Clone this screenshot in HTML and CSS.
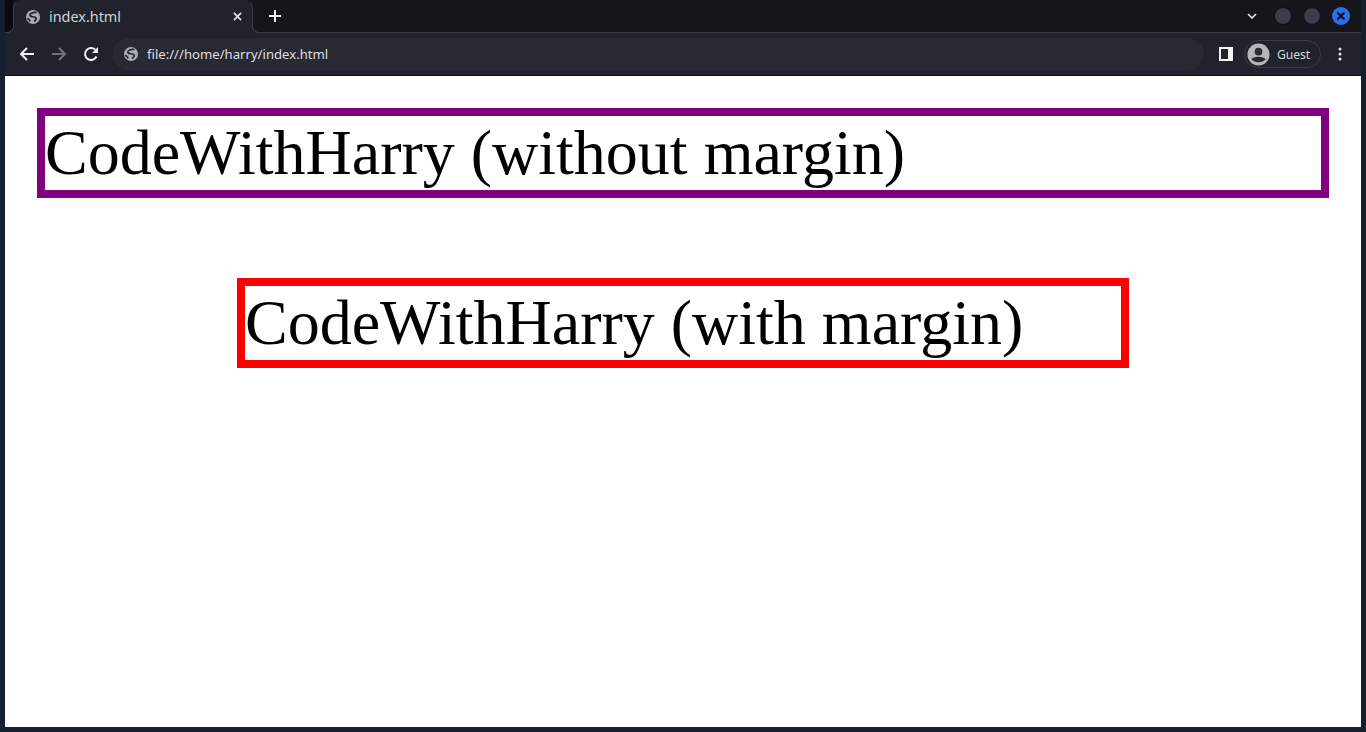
FILE: index.html
```html
<!DOCTYPE html>
<html lang="en">
<head>
    <meta charset="UTF-8">
    <title>index.html</title>
    <link rel="stylesheet" href="styles.css">
</head>
<body>
    <div class="window">
        <div class="tabstrip">
            <div class="tab">
                <svg class="globe" viewBox="0 0 14 14"><circle cx="7" cy="7" r="7" fill="#a9adb5"/><path d="M10.500 2.600C7.500 1.600 3 3.500 4 5.500 5 7.500 9 6 10 8c.6 1.200-.5 2.500-2 3.500M1 8.500c1.500 0 2.500 1 3 3" fill="none" stroke="#20232b" stroke-width="1.700"/></svg>
                <span class="tab-title">index.html</span>
                <svg class="tab-close" viewBox="0 0 10 10"><path d="M1 1l8 8M9 1l-8 8" stroke="#e4e5e8" stroke-width="1.800"/></svg>
            </div>
            <svg class="new-tab" viewBox="0 0 12 12"><path d="M6 0v12M0 6h12" stroke="#f1f2f4" stroke-width="2"/></svg>
            <div class="strip-right">
                <svg class="chevron" viewBox="0 0 10 6"><path d="M1 1l4 4 4-4" fill="none" stroke="#e4e5e8" stroke-width="1.600"/></svg>
                <span class="dot"></span>
                <span class="dot"></span>
                <span class="dot dot-close"><svg viewBox="0 0 10 10"><path d="M1.500 1.500l7 7M8.500 1.500l-7 7" stroke="#10131a" stroke-width="2.200"/></svg></span>
            </div>
        </div>
        <div class="toolbar">
            <svg class="nav-icon" viewBox="0 0 16 16"><path d="M15 8H2M8 2L2 8l6 6" fill="none" stroke="#f1f2f4" stroke-width="2"/></svg>
            <svg class="nav-icon" viewBox="0 0 16 16"><path d="M1 8h13M8 2l6 6-6 6" fill="none" stroke="#70737a" stroke-width="2"/></svg>
            <svg class="nav-icon" viewBox="0 0 16 16"><path d="M13.500 10.500A6 6 0 1 1 12.300 3.800" fill="none" stroke="#f1f2f4" stroke-width="2"/><path d="M15 1v6H9z" fill="#f1f2f4"/></svg>
            <div class="omnibox">
                <svg class="globe" viewBox="0 0 14 14"><circle cx="7" cy="7" r="7" fill="#a9adb5"/><path d="M10.500 2.600C7.500 1.600 3 3.500 4 5.500 5 7.500 9 6 10 8c.6 1.200-.5 2.500-2 3.500M1 8.500c1.500 0 2.500 1 3 3" fill="none" stroke="#282a33" stroke-width="1.700"/></svg>
                <span class="url">file:///home/harry/index.html</span>
            </div>
            <svg class="side-panel" viewBox="0 0 14 14"><path d="M0 0h14v14H0z" fill="#f1f2f4"/><path d="M2 2h7v10H2z" fill="#20232b"/></svg>
            <div class="profile">
                <svg class="avatar" viewBox="0 0 24 24"><circle cx="12" cy="12" r="11.500" fill="#b4b6ba"/><circle cx="12" cy="9" r="4" fill="#2a2c33"/><path d="M4.500 17c2-3.500 13-3.500 15 0-3.500 4-11.500 4-15 0z" fill="#2a2c33"/></svg>
                <span class="guest">Guest</span>
            </div>
            <svg class="menu" viewBox="0 0 4 14"><circle cx="2" cy="2" r="1.500" fill="#e4e5e8"/><circle cx="2" cy="7" r="1.500" fill="#e4e5e8"/><circle cx="2" cy="12" r="1.500" fill="#e4e5e8"/></svg>
        </div>
        <div class="page">
            <div class="box no-margin">CodeWithHarry (without margin)</div>
            <div class="box with-margin">CodeWithHarry (with margin)</div>
        </div>
    </div>
</body>
</html>
```

FILE: styles.css
```css
html, body {
    height: 100%;
}
body {
    margin: 0;
    background-color: #14202f;
    overflow: hidden;
}
.window {
    height: 732px;
    box-sizing: border-box;
    padding: 0 5px 5px;
    display: flex;
    flex-direction: column;
}
.tabstrip {
    height: 33px;
    flex-shrink: 0;
    background: linear-gradient(to right, #0a0b0e 8px, #14161c 8px);
    border-bottom: 1px solid #3a3d45;
    display: flex;
    align-items: center;
    padding-left: 8px;
    box-sizing: border-box;
    font-family: "Noto Sans", sans-serif;
}
.tab {
    position: relative;
    width: 240px;
    height: 33px;
    margin-bottom: -1px;
    box-sizing: border-box;
    background-color: #20232b;
    border: 1px solid #3a3d45;
    border-bottom: none;
    border-top-color: #20232b;
    border-radius: 8px 8px 0 0;
    display: flex;
    align-items: center;
    padding: 0 10px 1px 12px;
}
/* flared bottom corners of the active tab */
.tab::before,
.tab::after {
    content: "";
    position: absolute;
    bottom: 0;
    width: 8px;
    height: 8px;
}
.tab::before {
    right: 100%;
    background: radial-gradient(circle at 0 0, transparent 7px, #3a3d45 7.500px, #3a3d45 8px, #20232b 8.500px);
}
.tab::after {
    left: 100%;
    background: radial-gradient(circle at 100% 0, transparent 7px, #3a3d45 7.500px, #3a3d45 8px, #20232b 8.500px);
}
.globe {
    width: 14px;
    height: 14px;
    flex-shrink: 0;
}
.tab-title {
    color: #d0d2d6;
    font-size: 14.400px;
    margin-left: 9px;
    flex: 1;
}
.tab-close {
    width: 9px;
    height: 9px;
}
.new-tab {
    width: 12px;
    height: 12px;
    margin-left: 16px;
}
.strip-right {
    margin-left: auto;
    display: flex;
    align-items: center;
    gap: 11px;
    padding-right: 11px;
}
.chevron {
    width: 10px;
    height: 6px;
    margin-right: 6px;
}
.dot {
    width: 18px;
    height: 18px;
    border-radius: 50%;
    background-color: #3a3e4b;
    border: 1px solid #0c0e13;
    box-sizing: border-box;
}
.dot-close {
    background-color: #2a6ff0;
    border: none;
    display: flex;
    align-items: center;
    justify-content: center;
}
.dot-close svg {
    width: 10px;
    height: 10px;
}
.toolbar {
    height: 43px;
    flex-shrink: 0;
    box-sizing: border-box;
    background-color: #20232b;
    border-bottom: 1px solid #0c0e13;
    display: flex;
    align-items: center;
    padding: 0 15px 0 14px;
    font-family: "Noto Sans", sans-serif;
}
.nav-icon {
    width: 16px;
    height: 16px;
    margin-right: 16px;
    flex-shrink: 0;
}
.nav-icon:nth-child(3) {
    margin-right: 14px;
}
.omnibox {
    width: 1091px;
    height: 32px;
    border-radius: 16px;
    background-color: #282a33;
    display: flex;
    align-items: center;
    padding-left: 11px;
    box-sizing: border-box;
    flex-shrink: 0;
}
.url {
    color: #dcdde0;
    font-size: 13.150px;
    margin-left: 9px;
}
.side-panel {
    width: 14px;
    height: 14px;
    margin-left: 15px;
    flex-shrink: 0;
}
.profile {
    width: 77px;
    height: 28px;
    box-sizing: border-box;
    margin-left: 11px;
    border: 1px solid #3a3d45;
    border-radius: 14px;
    display: flex;
    align-items: center;
    flex-shrink: 0;
}
.avatar {
    width: 23px;
    height: 23px;
    margin-left: 2px;
}
.guest {
    color: #d7d8dc;
    font-size: 12px;
    margin-left: 7px;
}
.menu {
    width: 4px;
    height: 14px;
    margin-left: 17px;
    flex-shrink: 0;
}
.page {
    flex: 1;
    background-color: #fff;
    padding: 32px;
    color: #000;
    font-family: "Liberation Serif", serif;
    font-size: 64px;
}
.box {
    border-width: 8px;
    border-style: solid;
}
.no-margin {
    border-color: purple;
}
.with-margin {
    border-color: red;
    margin: 80px 200px 0;
}
```
